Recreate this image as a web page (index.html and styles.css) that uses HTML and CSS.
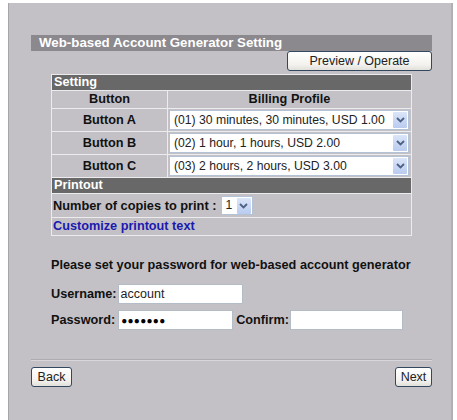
FILE: index.html
```html
<!DOCTYPE html>
<html>
<head>
<meta charset="utf-8">
<link rel="stylesheet" href="styles.css">
</head>
<body>
<div class="panel">
  <div class="content">
    <div class="titlebar">Web-based Account Generator Setting</div>
    <div class="actions"><span class="btn preview">Preview / Operate</span></div>
    <table class="setting">
      <tr><td colspan="2" class="sect">Setting</td></tr>
      <tr class="head"><td class="c1">Button</td><td class="c2">Billing Profile</td></tr>
      <tr class="row"><td class="c1">Button A</td><td class="c2"><div class="sel wide"><span class="val">(01) 30 minutes, 30 minutes, USD 1.00</span><span class="arr"><svg width="9" height="6" viewBox="0 0 9 6"><path d="M1 1 L4.5 4.5 L8 1" fill="none" stroke="#4d6185" stroke-width="1.8"/></svg></span></div></td></tr>
      <tr class="row"><td class="c1">Button B</td><td class="c2"><div class="sel wide"><span class="val">(02) 1 hour, 1 hours, USD 2.00</span><span class="arr"><svg width="9" height="6" viewBox="0 0 9 6"><path d="M1 1 L4.5 4.5 L8 1" fill="none" stroke="#4d6185" stroke-width="1.8"/></svg></span></div></td></tr>
      <tr class="row"><td class="c1">Button C</td><td class="c2"><div class="sel wide"><span class="val">(03) 2 hours, 2 hours, USD 3.00</span><span class="arr"><svg width="9" height="6" viewBox="0 0 9 6"><path d="M1 1 L4.5 4.5 L8 1" fill="none" stroke="#4d6185" stroke-width="1.8"/></svg></span></div></td></tr>
      <tr><td colspan="2" class="sect">Printout</td></tr>
      <tr class="copies"><td colspan="2"><div class="copyline"><span class="lbl">Number of copies to print :</span><div class="sel small"><span class="val">1</span><span class="arr"><svg width="9" height="6" viewBox="0 0 9 6"><path d="M1 1 L4.5 4.5 L8 1" fill="none" stroke="#4d6185" stroke-width="1.8"/></svg></span></div></div></td></tr>
      <tr class="link"><td colspan="2"><span class="custom">Customize printout text</span></td></tr>
    </table>
    <div class="pw">
      <p class="intro">Please set your password for web-based account generator</p>
      <div class="frow first"><span class="lbl">Username:</span><span class="inp user">account</span></div>
      <div class="frow"><span class="lbl">Password:</span><span class="inp pass">&#9679;&#9679;&#9679;&#9679;&#9679;&#9679;&#9679;</span><span class="lbl conf">Confirm:</span><span class="inp confirm"></span></div>
    </div>
    <div class="rule"></div>
    <div class="nav"><span class="btn back">Back</span><span class="btn next">Next</span></div>
  </div>
</div>
</body>
</html>
```
FILE: styles.css
```css
html, body { margin: 0; padding: 0; background: #fff; }
body { font-family: "Liberation Sans", Arial, sans-serif; font-size: 12px; color: #111; }
.panel {
  margin: 3px 4px 0 8px;
  height: 417px;
  box-sizing: border-box;
  background: #c4c1c6;
  border-left: 1px solid #a8a5aa;
  border-right: 2px solid #b3b0b5;
  padding: 32px 0 0 22px;
}
.content { width: 401px; }
.titlebar {
  height: 16px;
  line-height: 16px;
  background: #8b888e;
  color: #fff;
  font-weight: bold;
  font-size: 13.3px;
  padding-left: 8px;
}
.actions { display: flex; justify-content: flex-end; margin-top: 0; }
.btn {
  display: inline-flex;
  align-items: center;
  justify-content: center;
  box-sizing: border-box;
  height: 20px;
  border: 1px solid #33475f;
  border-radius: 3px;
  background: linear-gradient(#ffffff, #f3f2ee 70%, #e2e0da);
  font-size: 12.5px;
  color: #222;
}
.preview { width: 145px; }
.setting {
  margin: 3px 0 0 20px;
  width: 361px;
  border-collapse: collapse;
  border: 1px solid #ecebee;
}
.setting td { border: 1px solid #ecebee; padding: 0; line-height: 15px; }
.sect {
  background: #686868;
  color: #fff;
  font-weight: bold;
  height: 15px;
  line-height: 15px;
  padding-left: 2px !important;
  font-size: 12.7px;
}
.head td { height: 17px; font-weight: bold; text-align: center; font-size: 12.7px; }
.c1 { width: 115px; }
.row td { height: 22px; }
.row .c1 { font-weight: bold; text-align: center; font-size: 12.7px; }
.row .c2 { padding: 0 1px; }
.sel {
  display: flex;
  align-items: center;
  box-sizing: border-box;
  height: 20px;
  background: #fff;
  border: 1px solid #b4c2d6;
}
.sel .val { flex: 1; padding-left: 4px; font-size: 12.2px; white-space: nowrap; color: #222; overflow: hidden; }
.sel .arr {
  width: 14px;
  height: 16px;
  margin-right: 1px;
  display: flex;
  align-items: center;
  justify-content: center;
  background: linear-gradient(#dbe5f8, #b9cbef);
  border-radius: 1px;
}
.wide { width: 240px; }
.small { width: 32px; height: 19px; margin-left: 4px; }
.copies td { height: 23px; }
.copyline { display: flex; align-items: center; padding-left: 1px; }
.copyline .lbl { font-weight: bold; font-size: 12.8px; }
.link td { height: 17px; padding-left: 1px; }
.custom { color: #1a1ab0; font-weight: bold; font-size: 12.7px; }
.pw { padding-left: 20px; }
.intro { margin: 21px 0 0 0; font-weight: bold; font-size: 12.7px; height: 16px; line-height: 16px; }
.frow { display: flex; align-items: center; margin-top: 6px; }
.frow.first { margin-top: 11px; }
.frow .lbl { font-weight: bold; font-size: 12.7px; }
.inp {
  box-sizing: border-box;
  height: 20px;
  background: #fff;
  border: 1px solid #b4bcc8;
  display: inline-flex;
  align-items: center;
  padding-left: 2px;
  font-size: 12.5px;
  color: #222;
}
.user { width: 125px; margin-left: 1px; }
.pass { width: 115px; margin-left: 3px; font-size: 10px; letter-spacing: 0.3px; color: #000; }
.conf { margin-left: 3px; }
.confirm { width: 113px; margin-left: 1px; }
.rule { margin-top: 29px; height: 0; border-top: 1px solid #aeabb0; border-bottom: 1px solid #d8d6da; }
.nav { display: flex; justify-content: space-between; margin-top: 6px; }
.back { width: 41px; }
.next { width: 37px; }
```
